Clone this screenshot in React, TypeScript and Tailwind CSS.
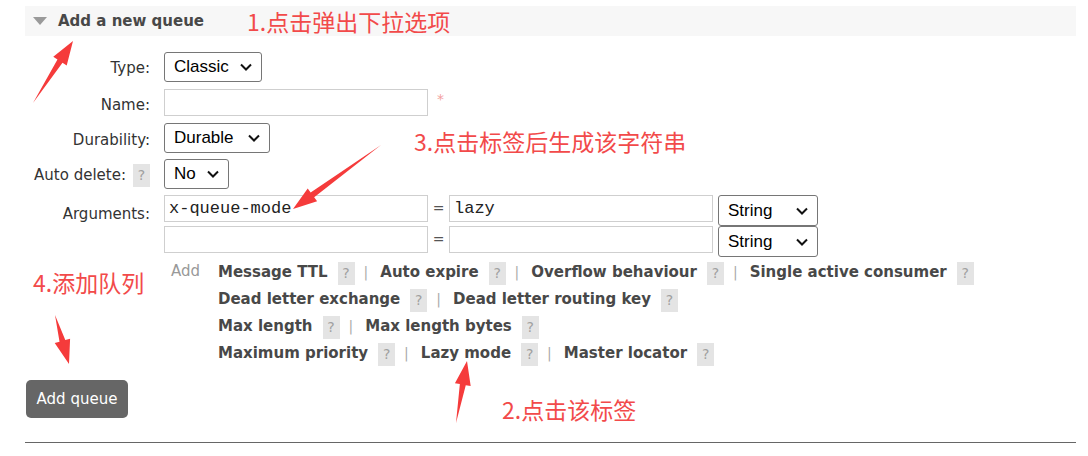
import React from 'react';

const label = "font-['DejaVu_Sans',Verdana,sans-serif] text-[15px] text-[#333]";
const bold = "font-['DejaVu_Sans',Verdana,sans-serif] text-[15px] font-bold text-[#484848]";
const cjk = "font-['Noto_Sans_CJK_SC',sans-serif] text-[23px] text-[#f24a4a] leading-none";

function Chevron() {
  return (
    <svg width="14" height="10" viewBox="0 0 14 10" className="shrink-0">
      <path d="M2 2.5 L7 7.5 L12 2.5" fill="none" stroke="#111" strokeWidth="2" />
    </svg>
  );
}

function FakeSelect({ value, width, height = 30 }: { value: string; width: number; height?: number }) {
  return (
    <div
      className="flex items-center justify-between border border-[#767676] rounded-[3px] bg-white pl-[9px] pr-[8px] font-['Liberation_Sans',Arial,sans-serif] text-[17px] text-black"
      style={{ width, height }}
    >
      <span>{value}</span>
      <Chevron />
    </div>
  );
}

function Help() {
  return (
    <span className="inline-flex items-center justify-center w-[17px] h-[23px] bg-[#e4e4e4] text-[#a0a0a0] font-['DejaVu_Sans',sans-serif] text-[14px]">
      ?
    </span>
  );
}

function Sep() {
  return <span className="text-[#aaa] font-['DejaVu_Sans',sans-serif] text-[14px] ml-[9px] mr-[12px]">|</span>;
}

function Arrow({ x1, y1, x2, y2 }: { x1: number; y1: number; x2: number; y2: number }) {
  const dx = x2 - x1;
  const dy = y2 - y1;
  const len = Math.hypot(dx, dy);
  const ux = dx / len;
  const uy = dy / len;
  const px = -uy;
  const py = ux;
  const head = 24;
  const hw = 8;
  const sw = 3;
  const bx = x2 - ux * head;
  const by = y2 - uy * head;
  const pts = [
    [x1, y1],
    [bx + px * sw, by + py * sw],
    [bx + px * hw, by + py * hw],
    [x2, y2],
    [bx - px * hw, by - py * hw],
    [bx - px * sw, by - py * sw],
  ]
    .map((p) => p.join(','))
    .join(' ');
  return <polygon points={pts} fill="#f53b3b" />;
}

const options = [
  ['Message TTL', 'Auto expire', 'Overflow behaviour', 'Single active consumer'],
  ['Dead letter exchange', 'Dead letter routing key'],
  ['Max length', 'Max length bytes'],
  ['Maximum priority', 'Lazy mode', 'Master locator'],
];

export default function App() {
  return (
    <div className="relative w-[1088px] h-[456px] bg-white overflow-hidden">
      <div className="pl-[25px] pr-[12px] pt-[6px]">
        {/* header */}
        <div className="h-[30px] bg-[#f7f7f7] flex items-center pl-[8px]">
          <svg width="14" height="8" viewBox="0 0 14 8" className="mr-[11px]">
            <polygon points="0,0 14,0 7,8" fill="#9a9a9a" />
          </svg>
          <span className={bold}>Add a new queue</span>
        </div>

        {/* form */}
        <div className="mt-[16px] flex flex-col">
          <div className="flex items-center h-[30px]">
            <div className={`w-[125px] text-right ${label} pt-[3px]`}>Type:</div>
            <div className="ml-[14px]">
              <FakeSelect value="Classic" width={98} />
            </div>
          </div>
          <div className="flex items-center h-[27px] mt-[7px]">
            <div className={`w-[125px] text-right ${label} pt-[5px]`}>Name:</div>
            <div className="ml-[14px] w-[264px] h-[27px] border border-[#cfcfcf] bg-white" />
            <span className="ml-[9px] text-[#f3a0a0] text-[14px] -mt-[6px] font-['DejaVu_Sans',sans-serif]">*</span>
          </div>
          <div className="flex items-center h-[30px] mt-[7px]">
            <div className={`w-[125px] text-right ${label} pt-[5px]`}>Durability:</div>
            <div className="ml-[14px]">
              <FakeSelect value="Durable" width={106} />
            </div>
          </div>
          <div className="flex items-center h-[30px] mt-[6px]">
            <div className="w-[125px] flex items-center justify-end gap-[7px] pt-[3px]">
              <span className={label}>Auto delete:</span>
              <Help />
            </div>
            <div className="ml-[14px]">
              <FakeSelect value="No" width={65} />
            </div>
          </div>
          <div className="flex items-start mt-[6px]">
            <div className={`w-[125px] text-right ${label} pt-[8px]`}>Arguments:</div>
            <div className="ml-[14px] flex flex-col">
              {['x-queue-mode', ''].map((k, i) => (
                <div key={i} className="flex items-start h-[31px]">
                  <div className="w-[264px] h-[27px] border border-[#cfcfcf] bg-white flex items-center pl-[4px] font-['Liberation_Mono',monospace] text-[17px] text-[#222]">
                    {k}
                  </div>
                  <span className="w-[21px] h-[27px] flex items-center justify-center font-['DejaVu_Sans',sans-serif] text-[14px] text-[#555]">=</span>
                  <div className="w-[264px] h-[27px] border border-[#cfcfcf] bg-white flex items-center pl-[4px] font-['Liberation_Mono',monospace] text-[17px] text-[#222]">
                    {i === 0 ? 'lazy' : ''}
                  </div>
                  <div className="ml-[5px]">
                    <FakeSelect value="String" width={100} height={31} />
                  </div>
                </div>
              ))}
            </div>
          </div>

          {/* add options */}
          <div className="flex mt-[4px] ml-[146px]">
            <span className="font-['DejaVu_Sans',sans-serif] text-[15px] text-[#999] w-[47px] -mt-[1px]">Add</span>
            <div className="flex flex-col gap-[4px]">
              {options.map((row, ri) => (
                <div key={ri} className="flex items-center h-[23px]">
                  {row.map((name, i) => (
                    <React.Fragment key={name}>
                      {i > 0 && <Sep />}
                      <span className={bold}>{name}</span>
                      <span className="ml-[10px]">
                        <Help />
                      </span>
                    </React.Fragment>
                  ))}
                </div>
              ))}
            </div>
          </div>

          <div className="mt-[15px] ml-[1px]">
            <button className="w-[102px] h-[38px] rounded-[5px] bg-[#666] text-white font-['DejaVu_Sans',sans-serif] text-[15px]">
              Add queue
            </button>
          </div>
        </div>

        <div className="mt-[24px] h-px bg-[#666]" />
      </div>

      {/* annotations */}
      <span className={`absolute left-[247px] top-[10px] ${cjk}`}>1.点击弹出下拉选项</span>
      <span className={`absolute left-[414px] top-[130px] ${cjk}`}>3.点击标签后生成该字符串</span>
      <span className={`absolute left-[33px] top-[271px] ${cjk}`}>4.添加队列</span>
      <span className={`absolute left-[502px] top-[398px] ${cjk}`}>2.点击该标签</span>
      <svg className="absolute left-0 top-0" width="1088" height="456">
        <Arrow x1={33} y1={103} x2={73} y2={41} />
        <Arrow x1={381} y1={145} x2={293} y2={209} />
        <Arrow x1={55} y1={315} x2={69} y2={364} />
        <Arrow x1={456} y1={423} x2={467} y2={361} />
      </svg>
    </div>
  );
}
